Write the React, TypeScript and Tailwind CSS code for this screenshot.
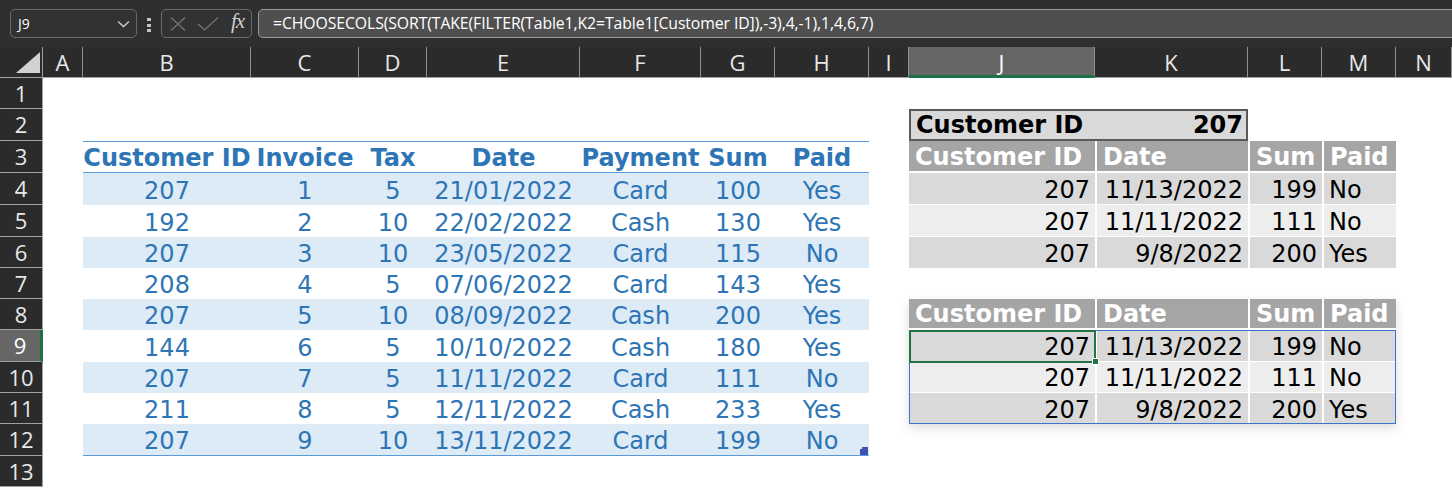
import React from "react";

const cols = ["A", "B", "C", "D", "E", "F", "G", "H", "I", "J", "K", "L", "M", "N"];

const rowStarts = [
  "row-start-2",
  "row-start-3",
  "row-start-4",
  "row-start-5",
  "row-start-6",
  "row-start-7",
  "row-start-8",
  "row-start-9",
  "row-start-10",
  "row-start-11",
  "row-start-12",
  "row-start-13",
  "row-start-14",
];

const leftHeaders = ["Customer ID", "Invoice", "Tax", "Date", "Payment", "Sum", "Paid"];
const leftRows: (string | number)[][] = [
  [207, 1, 5, "21/01/2022", "Card", 100, "Yes"],
  [192, 2, 10, "22/02/2022", "Cash", 130, "Yes"],
  [207, 3, 10, "23/05/2022", "Card", 115, "No"],
  [208, 4, 5, "07/06/2022", "Card", 143, "Yes"],
  [207, 5, 10, "08/09/2022", "Cash", 200, "Yes"],
  [144, 6, 5, "10/10/2022", "Cash", 180, "Yes"],
  [207, 7, 5, "11/11/2022", "Card", 111, "No"],
  [211, 8, 5, "12/11/2022", "Cash", 233, "Yes"],
  [207, 9, 10, "13/11/2022", "Card", 199, "No"],
];

const rightRows = [
  ["207", "11/13/2022", "199", "No"],
  ["207", "11/11/2022", "111", "No"],
  ["207", "9/8/2022", "200", "Yes"],
];

function Toolbar() {
  return (
    <div className="h-[47px] bg-[#2d2f31] flex items-start pt-[9px] pl-[10px] overflow-hidden">
      <div className="w-[127px] h-[29px] rounded-[5px] border border-[#6a6a6a] bg-[#303234] flex items-center pl-[7px] pr-[6px] text-white text-[14px] font-['Open_Sans',sans-serif]">
        <span className="flex-1">J9</span>
        <svg width="13" height="8" viewBox="0 0 13 8" fill="none">
          <path d="M1 1.5 L6.5 6.5 L12 1.5" stroke="#d0d0d0" strokeWidth="1.3" />
        </svg>
      </div>
      <div className="ml-[10px] mt-[9px] flex flex-col gap-[2.5px]">
        <div className="w-[4px] h-[3px] bg-[#c4c4c4]" />
        <div className="w-[4px] h-[3px] bg-[#c4c4c4]" />
        <div className="w-[4px] h-[3px] bg-[#c4c4c4]" />
      </div>
      <div className="ml-[10px] w-[91px] h-[29px] rounded-[5px] border border-[#6a6a6a] bg-[#303234] flex items-center pl-[8px]">
        <svg width="16" height="14" viewBox="0 0 16 14" fill="none">
          <path d="M1 0.5 L15 13.5 M15 0.5 L1 13.5" stroke="#767676" strokeWidth="1.2" />
        </svg>
        <svg className="ml-[11px]" width="22" height="14" viewBox="0 0 22 14" fill="none">
          <path d="M1 7 L7.5 13 L21 0.5" stroke="#767676" strokeWidth="1.2" />
        </svg>
        <span className="ml-[12px] text-[21px] leading-none italic text-[#cfcfcf] font-['Liberation_Serif',serif] -mt-[4px] tracking-[-1px]">
          fx
        </span>
      </div>
      <div className="ml-[6px] flex-1 -mr-[12px] h-[29px] rounded-[5px] border border-[#9a9a9a] bg-[#4f4f4f] flex items-center pl-[14px] text-white text-[15.8px] tracking-[-0.1px] font-['Open_Sans',sans-serif] whitespace-nowrap">
        =CHOOSECOLS(SORT(TAKE(FILTER(Table1,K2=Table1[Customer ID]),-3),4,-1),1,4,6,7)
      </div>
    </div>
  );
}

function LeftTable() {
  return (
    <div className="col-start-3 col-end-10 row-start-4 row-end-14 grid grid-cols-[168px_108px_68px_153px_121px_74px_94px] grid-rows-[32px_32px_32px_31px_31px_31px_32px_31px_31px_32px] relative text-[24px] text-[#2e75b6] font-['DejaVu_Sans',sans-serif]">
      {leftHeaders.map((h) => (
        <div
          key={h}
          className="flex items-end justify-center leading-[28px] font-bold border-t border-b border-[#5b9bd5] whitespace-nowrap"
        >
          {h}
        </div>
      ))}
      {leftRows.map((r, i) =>
        r.map((v, j) => (
          <div
            key={i + "-" + j}
            className={
              "flex items-end justify-center leading-[28px] whitespace-nowrap " +
              (i % 2 === 0 ? "bg-[#ddebf7] " : "") +
              (i === leftRows.length - 1 ? "border-b border-[#5b9bd5]" : "")
            }
          >
            {v}
          </div>
        ))
      )}
      <svg className="absolute right-[1px] bottom-[1px]" width="8" height="8" viewBox="0 0 8 8">
        <path d="M2 0 H8 V8 H0 V2 H2 Z" fill="#4051ad" />
      </svg>
    </div>
  );
}

function RightTable({ rowsClass, posClass, spill }: { rowsClass: string; posClass: string; spill?: boolean }) {
  const heads = ["Customer ID", "Date", "Sum", "Paid"];
  return (
    <div
      className={
        posClass +
        " grid grid-cols-[186px_153px_74px_74px] relative text-[24px] text-black font-['DejaVu_Sans',sans-serif] " +
        rowsClass +
        (spill ? " shadow-[0_4px_10px_rgba(0,0,0,0.14)]" : "")
      }
    >
      {heads.map((h, j) => (
        <div
          key={h}
          className={
            "bg-[#a5a5a5] text-white font-bold flex items-end pl-[6px] leading-[28px] whitespace-nowrap border-b-2 border-white " +
            (j > 0 ? "border-l-2" : "")
          }
        >
          {h}
        </div>
      ))}
      {rightRows.map((r, i) =>
        r.map((v, j) => (
          <div
            key={i + "-" + j}
            className={
              "flex items-end leading-[28px] whitespace-nowrap border-white " +
              (i % 2 === 0 ? "bg-[#d9d9d9] " : "bg-[#ededed] ") +
              (j === 3 ? "justify-start pl-[5px] " : "justify-end pr-[5px] ") +
              (j > 0 ? "border-l-2 " : "") +
              (i < 2 ? "border-b" : "")
            }
          >
            {v}
          </div>
        ))
      )}
      {spill && (
        <>
          <div className="absolute left-0 right-0 top-[31px] bottom-0 border border-[#3a73c9] pointer-events-none" />
          <div className="absolute left-0 top-[31px] w-[187px] h-[33px] border-2 border-[#217346] pointer-events-none" />
          <div className="absolute left-[183px] top-[59px] w-[7px] h-[7px] bg-[#217346] border border-white pointer-events-none" />
        </>
      )}
    </div>
  );
}

export default function App() {
  return (
    <div className="w-[1452px] h-[489px] overflow-hidden bg-white">
      <Toolbar />
      <div className="grid grid-cols-[43px_40px_168px_108px_68px_153px_121px_74px_94px_40px_186px_153px_74px_74px_1fr] grid-rows-[31px_31px_32px_32px_32px_32px_31px_31px_31px_32px_31px_31px_32px_31px]">
        <div className="bg-[#2b2b2b] border-r border-b border-[#a0a0a0] relative">
          <svg className="absolute left-[16px] top-[5px]" width="24" height="21" viewBox="0 0 24 21">
            <path d="M24 0 V21 H0 Z" fill="#d2d2d2" />
          </svg>
        </div>
        {cols.map((c) => (
          <div
            key={c}
            className={
              "flex items-center justify-center text-[22px] font-['Open_Sans',sans-serif] border-r border-[#8f8f8f] " +
              (c === "J"
                ? "bg-[#666666] text-white border-b-[3px] border-b-[#1e7145] pt-[2px]"
                : "bg-[#2b2b2b] text-[#e8e8e8] border-b border-b-[#a0a0a0]")
            }
          >
            {c}
          </div>
        ))}
        {rowStarts.map((rs, i) => (
          <div
            key={rs}
            className={
              rs +
              " col-start-1 flex items-center justify-center text-[22px] font-['Open_Sans',sans-serif] border-b border-[#a0a0a0] " +
              (i === 8
                ? "bg-[#666666] text-white border-r-[3px] border-r-[#1e7145]"
                : "bg-[#2b2b2b] text-[#e8e8e8] border-r border-r-[#a0a0a0]")
            }
          >
            {i + 1}
          </div>
        ))}
        <LeftTable />
        <div className="col-start-11 col-end-13 row-start-3 bg-[#d9d9d9] border-2 border-[#595959] flex items-end justify-between pl-[5px] pr-[3px] leading-[28px] text-[24px] font-bold text-black font-['DejaVu_Sans',sans-serif]">
          <span>Customer ID</span>
          <span>207</span>
        </div>
        <RightTable posClass="col-start-11 col-end-15 row-start-4 row-end-8" rowsClass="grid-rows-[32px_32px_32px_31px]" />
        <RightTable posClass="col-start-11 col-end-15 row-start-9 row-end-13" rowsClass="grid-rows-[31px_32px_31px_31px]" spill />
      </div>
    </div>
  );
}
